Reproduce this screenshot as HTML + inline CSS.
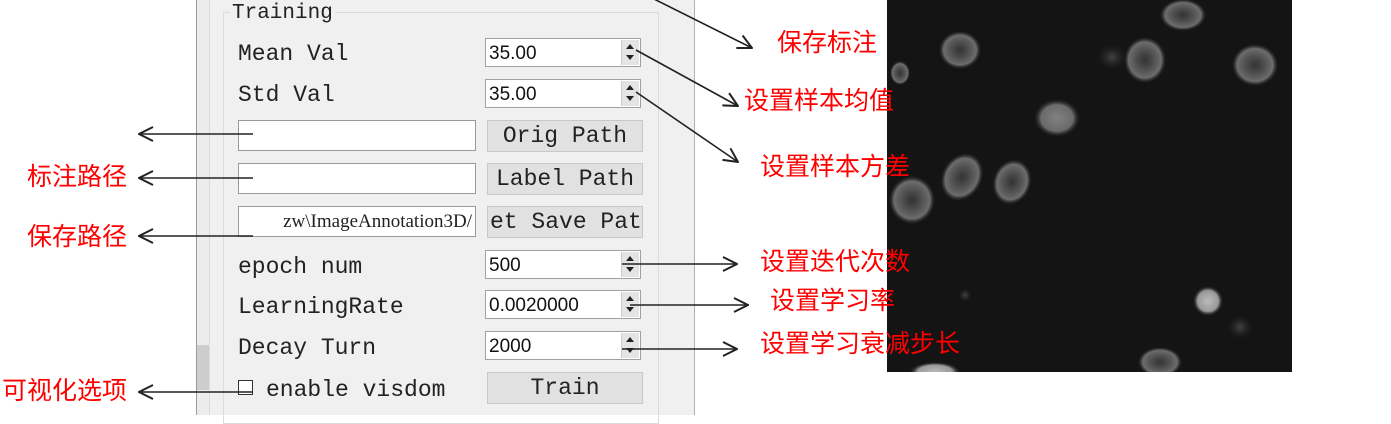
<!DOCTYPE html>
<html><head><meta charset="utf-8"><style>
body{margin:0;width:1391px;height:415px;background:#fff;position:relative;overflow:hidden;font-family:"Liberation Mono",monospace;}
.a{position:absolute}
.lbl{position:absolute;font-size:23px;color:#222;line-height:1;font-family:"Liberation Mono","Liberation Serif",monospace;}
.spin{position:absolute;left:485px;width:156px;height:29px;background:#fff;border:1px solid #a0a0a0;box-sizing:border-box;}
.spin span{position:absolute;left:3px;top:4px;font-size:19px;font-family:"Liberation Sans",sans-serif;color:#111;}
.spin i{position:absolute;right:1px;top:1px;width:17px;height:25px;background:#e4e4e4;border-left:1px solid #ccc;}
.spin i:before{content:"";position:absolute;left:4px;top:4px;border:4px solid transparent;border-bottom:5px solid #222;border-top:0}
.spin i:after{content:"";position:absolute;left:4px;top:15px;border:4px solid transparent;border-top:5px solid #222;border-bottom:0}
.inp{position:absolute;left:238px;width:238px;height:31px;background:#fff;border:1px solid #9a9a9a;box-sizing:border-box;overflow:hidden;}
.btn{position:absolute;left:487px;width:156px;height:32px;background:#e1e1e1;border:1px solid #c8c8c8;box-sizing:border-box;font-size:23px;text-align:center;line-height:30px;color:#222;overflow:hidden;white-space:nowrap}
.red{position:absolute;color:#ff0000;font-size:25px;line-height:1;font-family:"Liberation Sans","WenQuanYi Zen Hei","Noto Sans CJK SC",sans-serif;white-space:nowrap}
</style></head><body>
<div class="a" style="left:196px;top:0;width:1px;height:415px;background:#a890a8"></div>
<div class="a" style="left:197px;top:0;width:12px;height:415px;background:#ececec"></div>
<div class="a" style="left:197px;top:345px;width:12px;height:45px;background:#cdcdcd"></div>
<div class="a" style="left:209px;top:0;width:484px;height:415px;background:#f0f0f0;border-left:1px solid #ddd;border-right:1px solid #b0b0b0"></div>
<div class="a" style="left:223px;top:12px;width:434px;height:410px;border:1px solid #dcdcdc"></div>
<div class="lbl" style="left:230px;top:3px;background:#f0f0f0;padding:0 2px;font-size:21px">Training</div>
<div class="lbl" style="left:238px;top:43px">Mean Val</div>
<div class="lbl" style="left:238px;top:84px">Std Val</div>
<div class="lbl" style="left:238px;top:256px">epoch num</div>
<div class="lbl" style="left:238px;top:296px">LearningRate</div>
<div class="lbl" style="left:238px;top:337px">Decay Turn</div>
<div class="a" style="left:238px;top:380px;width:15px;height:15px;border:1px solid #333;background:#fff;box-sizing:border-box"></div>
<div class="lbl" style="left:266px;top:379px">enable visdom</div>
<div class="spin" style="top:38px"><span>35.00</span><i></i></div>
<div class="spin" style="top:79px"><span>35.00</span><i></i></div>
<div class="spin" style="top:250px"><span>500</span><i></i></div>
<div class="spin" style="top:290px"><span>0.0020000</span><i></i></div>
<div class="spin" style="top:331px"><span>2000</span><i></i></div>
<div class="inp" style="top:120px"></div>
<div class="inp" style="top:163px"></div>
<div class="inp" style="top:206px"><div style="position:absolute;right:3px;top:4px;font-size:19px;font-family:'Liberation Serif',serif;white-space:nowrap;color:#222">zw\ImageAnnotation3D/</div></div>
<div class="btn" style="top:120px">Orig Path</div>
<div class="btn" style="top:163px">Label Path</div>
<div class="btn" style="top:206px;text-align:left;padding-left:2px">et Save Pat</div>
<div class="btn" style="top:372px">Train</div>
<svg class="a" style="left:887px;top:0" width="405" height="372">
<defs>
<radialGradient id="r" cx=".5" cy=".5" r=".5"><stop offset="0" stop-color="#555" stop-opacity=".5"/><stop offset=".78" stop-color="#8a8a8a" stop-opacity=".75"/><stop offset="1" stop-color="#444" stop-opacity="0"/></radialGradient>
<radialGradient id="b" cx=".5" cy=".5" r=".5"><stop offset="0" stop-color="#bbb"/><stop offset=".7" stop-color="#999"/><stop offset="1" stop-color="#333" stop-opacity="0"/></radialGradient>
<radialGradient id="f" cx=".5" cy=".5" r=".5"><stop offset="0" stop-color="#444"/><stop offset="1" stop-color="#222" stop-opacity="0"/></radialGradient>
</defs>
<rect width="405" height="372" fill="#141414"/>
<ellipse cx="73" cy="50" rx="21" ry="19" fill="url(#r)"/>
<ellipse cx="296" cy="15" rx="23" ry="16" fill="url(#r)"/>
<ellipse cx="258" cy="60" rx="21" ry="23" fill="url(#r)"/>
<ellipse cx="225" cy="57" rx="15" ry="13" fill="url(#f)"/>
<ellipse cx="368" cy="65" rx="23" ry="21" fill="url(#r)"/>
<ellipse cx="13" cy="73" rx="10" ry="12" fill="url(#r)"/>
<ellipse cx="170" cy="118" rx="23" ry="19" fill="url(#b)" opacity=".65"/>
<ellipse cx="75" cy="177" rx="20" ry="25" fill="url(#r)" transform="rotate(30 75 177)"/>
<ellipse cx="125" cy="182" rx="19" ry="23" fill="url(#r)" transform="rotate(20 125 182)"/>
<ellipse cx="25" cy="200" rx="23" ry="24" fill="url(#r)"/>
<ellipse cx="321" cy="301" rx="15" ry="15" fill="url(#b)"/>
<ellipse cx="353" cy="327" rx="13" ry="12" fill="url(#f)"/>
<ellipse cx="273" cy="362" rx="22" ry="15" fill="url(#r)"/>
<ellipse cx="48" cy="372" rx="25" ry="10" fill="url(#b)"/>
<ellipse cx="78" cy="295" rx="7" ry="7" fill="url(#f)"/>
</svg>
<svg class="a" style="left:0;top:0" width="1391" height="415">
<defs><marker id="m" markerWidth="16" markerHeight="16" refX="15" refY="8" orient="auto" markerUnits="userSpaceOnUse"><path d="M1,1 L15,8 L1,15" fill="none" stroke="#222" stroke-width="2"/></marker></defs>
<g stroke="#222" stroke-width="1.6" fill="none" marker-end="url(#m)">
<line x1="650" y1="-3" x2="752" y2="48"/>
<line x1="636" y1="50" x2="738" y2="106"/>
<line x1="636" y1="92" x2="738" y2="162"/>
<line x1="253" y1="134" x2="139" y2="134"/>
<line x1="253" y1="178" x2="139" y2="178"/>
<line x1="253" y1="236" x2="139" y2="236"/>
<line x1="253" y1="392" x2="139" y2="392"/>
<line x1="622" y1="264" x2="737" y2="264"/>
<line x1="630" y1="305" x2="748" y2="305"/>
<line x1="622" y1="349" x2="737" y2="349"/>
</g></svg>
<div class="red" style="left:777px;top:31px">保存标注</div>
<div class="red" style="left:744px;top:89px">设置样本均值</div>
<div class="red" style="left:760px;top:155px">设置样本方差</div>
<div class="red" style="left:27px;top:165px">标注路径</div>
<div class="red" style="left:27px;top:225px">保存路径</div>
<div class="red" style="left:2px;top:379px">可视化选项</div>
<div class="red" style="left:760px;top:250px">设置迭代次数</div>
<div class="red" style="left:770px;top:289px">设置学习率</div>
<div class="red" style="left:760px;top:332px">设置学习衰减步长</div>
</body></html>
